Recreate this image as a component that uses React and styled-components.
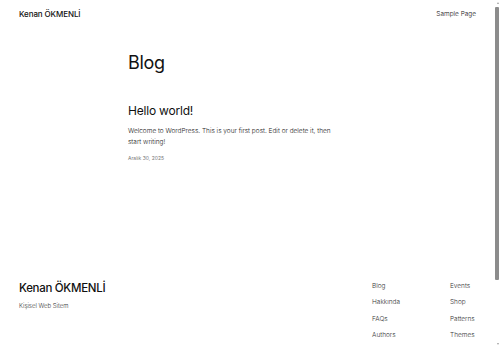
import React from "react";
import styled, { createGlobalStyle } from "styled-components";

const Global = createGlobalStyle`
  html, body { margin: 0; padding: 0; background: #fff; overflow: hidden; }
  body { font-family: Inter, "Noto Sans", sans-serif; color: #111; -webkit-font-smoothing: antialiased; }
  * { box-sizing: border-box; }
`;

const Shell = styled.div`
  display: flex;
  height: 100vh;
  overflow: hidden;
`;

const Page = styled.div`
  flex: 1;
  min-width: 0;
  overflow: hidden;
`;

const ScrollBar = styled.div`
  width: 15px;
  flex: none;
  display: flex;
  flex-direction: column;
  align-items: flex-end;
  padding: 2px 1px 3px 0;
  background: #fff;
`;

const Arrow = styled.div`
  width: 0;
  height: 0;
  margin-right: 0.5px;
  border-left: 1.5px solid transparent;
  border-right: 1.5px solid transparent;
  ${(p) => (p.$down ? "border-top: 2px solid #a0a0a0;" : "border-bottom: 2px solid #a0a0a0;")}
`;

const Thumb = styled.div`
  width: 4px;
  height: 273px;
  margin-top: 3px;
  background: #8c8c8c;
  border-radius: 1px;
`;

const Spacer = styled.div`
  flex: 1;
`;

const Header = styled.header`
  display: flex;
  justify-content: space-between;
  align-items: center;
  height: 27px;
  padding: 0 9px 0 19px;
`;

const SiteTitle = styled.a`
  font-size: 8px;
  font-weight: 500;
  letter-spacing: -0.1px;
  color: #111;
  text-decoration: none;
`;

const NavLink = styled.a`
  font-size: 6.5px;
  font-weight: 300;
  color: #111;
  text-decoration: none;
`;

const Main = styled.main`
  width: 229px;
  margin: 0 auto;
  padding-top: 23px;
`;

const PageTitle = styled.h1`
  margin: 0;
  font-size: 18px;
  font-weight: 400;
  line-height: 26px;
  letter-spacing: -0.3px;
`;

const Post = styled.article`
  margin-top: 26px;
`;

const PostTitle = styled.h2`
  margin: 0;
  font-size: 12px;
  font-weight: 400;
  line-height: 17px;
  letter-spacing: -0.2px;
`;

const Excerpt = styled.p`
  margin: 7px 0 0;
  max-width: 214px;
  font-size: 6.5px;
  line-height: 11px;
  font-weight: 300;
  color: #222;
`;

const PostDate = styled.time`
  display: block;
  margin-top: 7px;
  font-size: 5px;
  color: #777;
`;

const Footer = styled.footer`
  margin-top: 119px;
  display: flex;
  justify-content: space-between;
  padding: 0 9px 40px 19px;
`;

const Brand = styled.div`
  display: flex;
  flex-direction: column;
`;

const FooterTitle = styled.div`
  font-size: 11.5px;
  font-weight: 500;
  letter-spacing: -0.3px;
  line-height: 16px;
`;

const Tagline = styled.div`
  margin-top: 6px;
  font-size: 6px;
  font-weight: 300;
  color: #333;
`;

const FooterNav = styled.nav`
  display: grid;
  grid-template-columns: 78px 26px;
  margin-top: -2px;
`;

const FooterLink = styled.a`
  font-size: 6.5px;
  font-weight: 300;
  line-height: 16.3px;
  color: #333;
  text-decoration: none;
  white-space: nowrap;
`;

const links = ["Blog", "Events", "Hakkında", "Shop", "FAQs", "Patterns", "Authors", "Themes"];

export default function App() {
  return (
    <>
      <Global />
      <Shell>
        <Page>
          <Header>
            <SiteTitle href="#">Kenan ÖKMENLİ</SiteTitle>
            <NavLink href="#">Sample Page</NavLink>
          </Header>
          <Main>
            <PageTitle>Blog</PageTitle>
            <Post>
              <PostTitle>Hello world!</PostTitle>
              <Excerpt>
                Welcome to WordPress. This is your first post. Edit or delete it, then start writing!
              </Excerpt>
              <PostDate>Aralık 30, 2025</PostDate>
            </Post>
          </Main>
          <Footer>
            <Brand>
              <FooterTitle>Kenan ÖKMENLİ</FooterTitle>
              <Tagline>Kişisel Web Sitem</Tagline>
            </Brand>
            <FooterNav>
              {links.map((l) => (
                <FooterLink key={l} href="#">{l}</FooterLink>
              ))}
            </FooterNav>
          </Footer>
        </Page>
        <ScrollBar aria-hidden="true">
          <Arrow />
          <Thumb />
          <Spacer />
          <Arrow $down />
        </ScrollBar>
      </Shell>
    </>
  );
}
